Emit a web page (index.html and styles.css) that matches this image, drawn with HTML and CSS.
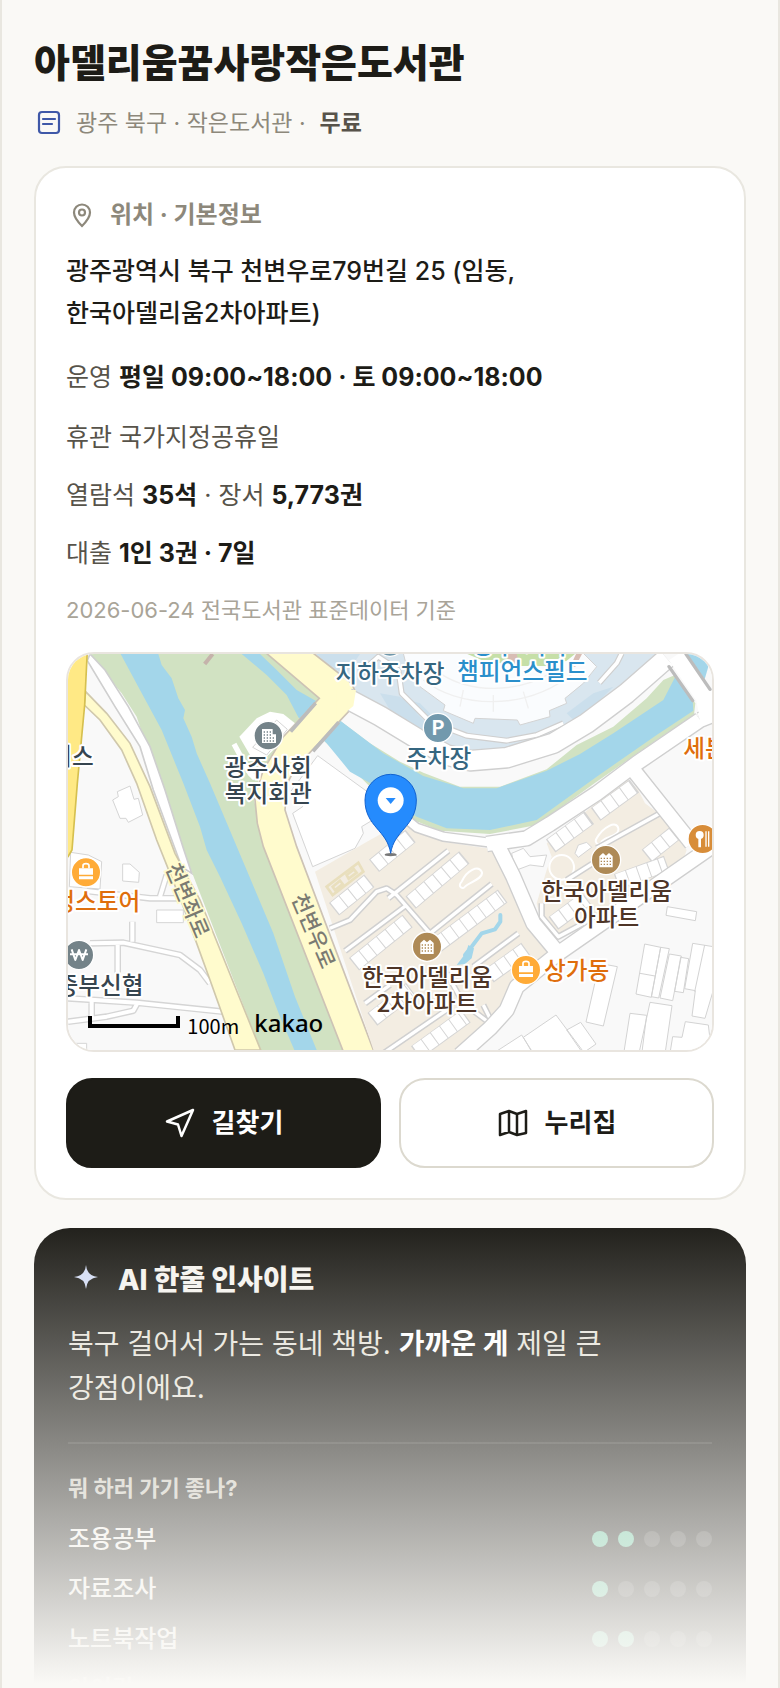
FILE: index.html
```html
<!DOCTYPE html>
<html lang="ko">
<head>
  <meta charset="UTF-8" />
  <meta name="viewport" content="width=device-width, initial-scale=1.0" />
  <title>아델리움꿈사랑작은도서관</title>
  <link rel="stylesheet" href="styles.css">
</head>
<body>
  <main class="page">
    <header class="head">
      <h1>아델리움꿈사랑작은도서관</h1>
      <p class="meta">
        <svg class="meta-icon" viewBox="0 0 30 30" aria-hidden="true">
          <rect x="5" y="4" width="20" height="21" rx="3"/>
          <path d="M9 11h12M9 16h9"/>
        </svg>
        <span>광주 북구 · 작은도서관 ·</span>
        <b>무료</b>
      </p>
    </header>

    <section class="card">
      <h2 class="card-title">
        <svg class="pin-icon" viewBox="0 0 32 32" aria-hidden="true">
          <path d="M16 27C11 22 8 18 8 13.500a8 8 0 0 1 16 0C24 18 21 22 16 27z"/>
          <circle cx="16" cy="13.500" r="3"/>
        </svg>
        위치 · 기본정보
      </h2>
      <p class="address">광주광역시 북구 천변우로79번길 25 (임동,<br>한국아델리움2차아파트)</p>
      <p class="hours">운영 <b>평일 09:00~18:00 · 토 09:00~18:00</b></p>
      <p class="row">휴관 국가지정공휴일</p>
      <p class="row">열람석 <b>35석</b> · 장서 <b>5,773권</b></p>
      <p class="row">대출 <b>1인 3권 · 7일</b></p>
      <p class="note">2026-06-24 전국도서관 표준데이터 기준</p>

      <div class="map">
        <svg viewBox="54 42 1932 1188" preserveAspectRatio="xMidYMid slice" role="img" aria-label="지도">
          <rect x="0" y="0" width="2100" height="1300" fill="#f9f9f9"/>

          <!-- parks -->
          <path fill="#d1e2c2" d="M118 42H655L810 175 720 275 630 400 612 480 640 600 880 1230H632L450 760 400 630 330 440 260 230 215 160z"/>
          <path fill="#d1e2c2" d="M860 235 960 310 1050 365 1120 398 1230 440H1350L1490 388 1580 315 1690 260 1790 175 1840 120 1875 105 1936 190 1932 225 1820 300 1640 425 1460 555 1320 582 1170 572 1090 540 960 440 820 300z"/>

          <!-- river -->
          <path fill="#a3d6ea" d="M212 42H325L335 75 365 115 385 175 405 210 400 235 425 290 440 340 480 430 590 690 670 880 735 1070 800 1230H733L690 1130 640 1000 575 850 510 710 470 630 450 560 400 430 335 270 270 150z"/>
          <path fill="#a3d6ea" d="M575 42H630L680 90 740 150 810 190 875 245 1000 340 1120 408 1240 445H1340L1490 392 1590 342 1690 280 1840 180 1875 112 1928 180 1930 212 1820 285 1640 410 1460 540 1320 570 1190 565 1100 530 980 440 900 395 830 310 745 232 710 165 650 105z"/>
          <path fill="#a3d6ea" d="M1908 42H1986L1964 118z"/>
          <path fill="none" stroke="#c5b3ab" stroke-width="12" d="M488 42 464 72"/>

          <!-- stadium -->
          <path fill="#d9e6ef" d="M795 42H1830L1630 215 1530 285 1420 322 1300 335 1200 325 1110 275 910 150z"/>
          <path fill="#cbdfec" d="M800 42h130l-40 60-50-20zM990 160l60 10 120 120-60-20-90-60zM1040 170l70 20 80 80-40-10zM1550 220l80-60 60-20-60 60-60 40z"/>
          <g fill="none" stroke-linejoin="round">
            <path stroke="#cfcfcf" stroke-width="18" d="M935 95 985 50 1045 90 1055 160 1140 245 1250 287 1370 302 1460 285 1540 250M1648 128 1700 70 1715 40"/>
            <path stroke="#fff" stroke-width="11" d="M935 95 985 50 1045 90 1055 160 1140 245 1250 287 1370 302 1460 285 1540 250M1648 128 1700 70 1715 40"/>
          </g>
          <path fill="#fafcfe" stroke="#d3d3d3" stroke-width="3" d="M1060 40 1075 100 1110 140 1185 195 1180 212 1270 250 1275 235 1402 240 1410 255 1500 230 1498 212 1550 190 1545 175 1600 130 1640 80 1600 40z"/>
          <path fill="none" stroke="#f0f0f0" stroke-width="4" d="M1120 120C1220 200 1420 220 1570 100M1170 100c90 60 230 60 330 0M1240 150l-10 50M1330 165v50M1420 155l15 50"/>
          <path fill="#c6dfa8" d="M1252 42H1575L1550 62 1500 78 1410 78 1300 62z"/>
          <path fill="#d8bdb4" d="M1370 42h30l10 36h-30zM1578 42h18l-20 38h-16z"/>

          <!-- lots and buildings on the west bank -->
          <g fill="#fff" stroke="#d5d5d5" stroke-width="3">
            <path d="M188 480 205 470 202 455 240 438 252 478 265 475 278 525 235 547 228 535 210 535z"/>
            <path d="M218 672H240L268 697 266 727 218 723zM62 637 115 645 155 665 150 747 58 740zM320 810h80v38h-80zM54 1210h56v30H54z"/>
            <path stroke="none" d="M568 290 620 235 660 215 700 222 735 250 720 280 650 350 600 345z"/>
            <path fill="none" d="M608 322 680 240 712 268 650 345z"/>
            <path d="M803 347 1000 490 985 530 935 560 940 580 915 625 788 680 728 520 758 500 722 455z"/>
          </g>
          <g fill="none" stroke-linejoin="round">
            <path stroke="#d5d5d5" stroke-width="20" d="M110 753 300 775 400 775M330 770 350 705M120 910 220 908 390 945 450 990 480 1030M247 905V845M203 915V1000M54 1075 260 1088 520 1115M54 1145 170 1130 250 1112 262 1090M125 1080V1140"/>
            <path stroke="#fff" stroke-width="12" d="M110 753 300 775 400 775M330 770 350 705M120 910 220 908 390 945 450 990 480 1030M247 905V845M203 915V1000M54 1075 260 1088 520 1115M54 1145 170 1130 250 1112 262 1090M125 1080V1140"/>
            <path stroke="#fff" stroke-width="16" d="M552 312 600 400 615 415"/>
          </g>

          <!-- west roads -->
          <path fill="#fff" stroke="#cfcfcf" stroke-width="5" d="M112 62 120 42 165 90 235 200 300 320 345 450 400 625 425 700 395 680 310 450 270 320 195 200z"/>
          <path fill="#fffbcd" stroke="#d0c8ac" stroke-width="5" d="M107 155 170 220 240 310 300 440 375 640 450 780 632 1230H555L480 1020 400 800 320 600 260 430 215 330 150 240 103 195z"/>
          <path fill="#ffe985" stroke="#d6c04f" stroke-width="5" d="M40 30H112L104 195 82 430 66 630 54 650H40z"/>
          <path fill="#fffbcd" stroke="#cdc3b5" stroke-width="5" d="M640 32 808 175 700 290 640 390 614 470 622 550 640 620 880 1235H972L740 620 705 510 712 430 735 385 905 205 918 160 905 130 785 36z"/>
          <path stroke="#bcbcbc" stroke-width="11" d="M722 275 797 189M789 334 866 247"/>

          <!-- east blocks -->
          <path fill="#f3ede2" d="M795 695 960 600 1065 542 1180 605 1330 628 1380 720 1455 855 1515 940 1490 975 1415 1035 1390 1100 1340 1145 1250 1235H972z"/>
          <path fill="#f3ede2" d="M1490 610 1730 415 1765 450 1785 490 1825 520 1910 630 1900 660 1530 895 1470 830 1460 790 1490 690 1505 650z"/>
          <g fill="none" stroke="#e9dfbd" stroke-width="8">
            <path d="M830 740 925 668 940 695 848 765zM848 740 870 722 878 732 855 750zM890 705 912 688 920 698 896 716z"/>
            <path stroke="#fff" stroke-width="6" d="M1235 725c15-35 50-50 60-30s-45 35-50 45-25 0-10-15zM1640 595c20-35 60-55 65-30s-45 25-50 40-25 5-15-10z"/>
            <circle cx="1535" cy="682" r="37" stroke="#fff" stroke-width="6"/>
          </g>

          <g fill="none" stroke="#d5d5d5" stroke-width="48">
            <path d="M972 677 1082 588M852 808 958 722M1082 788 1243 652M912 973 1073 843M1157 918 1358 768M1317 1008 1428 928M967 1138 1083 1048M1097 1238 1248 1128M1502 618 1618 533M1637 523 1753 438M1790 648 1883 573M1510 850 1610 775M1700 725 1850 670"/>
          </g>
          <g fill="none" stroke="#fff" stroke-width="43" stroke-dasharray="31 3">
            <path d="M975 675 1080 590M855 805 955 725M1085 785 1240 655M915 970 1070 845M1160 915 1355 770M1320 1005 1425 930M970 1135 1080 1050M1100 1235 1245 1130M1505 615 1615 535M1640 520 1750 440M1793 645 1880 576M1513 847 1607 777M1703 723 1847 672"/>
          </g>

          <g fill="none" stroke-linejoin="round">
            <path stroke="#d0d0d0" stroke-width="19" d="M840 865 900 840 980 755 1010 745 1040 765 1140 880 1150 900M1015 775 1195 632M885 933 1070 795M1140 880 1325 732M1270 980 1405 880M945 1090 1020 1035M1000 1240 1190 1110M1190 1000 1240 1090 1320 1150M1300 1095 1325 1145M1475 790V830L1525 890 1600 850M1550 720 1660 650M1640 625 1830 520"/>
            <path stroke="#fff" stroke-width="10" d="M840 865 900 840 980 755 1010 745 1040 765 1140 880 1150 900M1015 775 1195 632M885 933 1070 795M1140 880 1325 732M1270 980 1405 880M945 1090 1020 1035M1000 1240 1190 1110M1190 1000 1240 1090 1320 1150M1300 1095 1325 1145M1475 790V830L1525 890 1600 850M1550 720 1660 650M1640 625 1830 520"/>
          </g>
          <path fill="none" stroke="#a3d6ea" stroke-width="12" stroke-linecap="round" stroke-linejoin="round" d="M1351 825V845L1335 868 1295 880 1265 920 1245 945"/>
          <path fill="#a3d6ea" d="M1220 975 1248 938 1255 915 1272 925 1265 955 1245 972z"/>
          <path fill="#fff" stroke="#d5d5d5" stroke-width="3" d="M1385 640 1420 625 1440 650 1490 645 1480 680 1440 675 1395 692zM1575 640l10-25 25-8 15 15-40 30z"/>

          <!-- main roads -->
          <g fill="none" stroke-linejoin="round">
            <path stroke="#cfcfcf" stroke-width="66" d="M890 175 990 228 1100 295 1190 345 1260 362 1370 353 1510 310 1610 250 1730 160 1850 55"/>
            <path stroke="#cfcfcf" stroke-width="32" d="M1060 530 1100 563 1180 590 1320 608"/>
            <path stroke="#cfcfcf" stroke-width="50" d="M1310 612 1430 595 1500 552 1640 460 1760 370 1950 240M1950 240 2000 220M1340 610 1390 710 1450 850 1525 940 1400 1040 1370 1110 1320 1165 1230 1245M1525 940 2000 610M1750 390 1925 610"/>
            <path stroke="#fff" stroke-width="58" d="M890 175 990 228 1100 295 1190 345 1260 362 1370 353 1510 310 1610 250 1730 160 1850 55"/>
            <path stroke="#fff" stroke-width="23" d="M1060 530 1100 563 1180 590 1320 608"/>
            <path stroke="#fff" stroke-width="42" d="M1310 612 1430 595 1500 552 1640 460 1760 370 1950 240M1950 240 2000 220M1340 610 1390 710 1450 850 1525 940 1400 1040 1370 1110 1320 1165 1230 1245M1525 940 2000 610M1750 390 1925 610"/>
            <path stroke="#fff" stroke-width="56" d="M1880 45 1965 170 1975 220"/>
            <path stroke="#bcbcbc" stroke-width="10" stroke-linecap="round" d="M1857 80 1928 182M1908 42 1980 148"/>
          </g>
          <path fill="#fffbcd" d="M860 150 918 150 910 198 860 240z"/>

          <!-- south east buildings -->
          <g fill="#fff" stroke="#d3d3d3" stroke-width="3">
            <path d="M1852 800 1940 815 1936 842 1848 826z"/>
            <path d="M1648 970 1702 980 1660 1158 1608 1146z"/>
            <path d="M1784 912 1832 922 1804 1072 1758 1062zM1832 922 1858 926 1826 1074 1804 1070zM1858 942 1894 948 1868 1082 1830 1074zM1892 952 1916 956 1900 1058 1874 1054zM1928 910 1990 920V1050L1965 1135 1926 1128 1936 1052 1904 1046z"/>
            <path fill="none" d="M1770 1000l45 8M1964 915l-30 140"/>
            <path d="M1740 1120 1790 1126 1776 1235H1722zM1800 1087 1866 1097 1846 1235H1768zM1906 1145 1975 1155 1985 1240H1860L1868 1190 1896 1192z"/>
            <path d="M1420 1192 1518 1125 1600 1235H1445zM1550 1170 1592 1147 1638 1212 1605 1235H1595zM1330 1240 1415 1185 1450 1240z"/>
          </g>

          <!-- place icons -->
          <g stroke="#fff" stroke-width="4">
            <circle cx="1020" cy="6" r="43" fill="#6f97ab"/>
            <circle cx="655" cy="287" r="43" fill="#748389"/>
            <circle cx="1164" cy="264" r="44" fill="#7299ad"/>
            <circle cx="1131" cy="920" r="44" fill="#ae8a56"/>
            <circle cx="1668" cy="660" r="44" fill="#ae8a56"/>
            <circle cx="108" cy="697" r="44" fill="#ffab37"/>
            <circle cx="1428" cy="990" r="44" fill="#ffab37"/>
            <circle cx="1958" cy="597" r="44" fill="#d88d39"/>
            <circle cx="87" cy="945" r="44" fill="#748389"/>
          </g>
          <path fill="#fff" d="M636 267h32v16h10v26h-42z"/>
          <path fill="none" stroke="#748389" stroke-width="4" stroke-dasharray="4 5" d="M641 276h26M641 285h26M641 294h36M641 303h36"/>
          <g fill="#fff">
            <path d="M1111 909l11-10 9 8 9-8 11 10v33h-40z"/>
            <path d="M1648 649l11-10 9 8 9-8 11 10v33h-40z"/>
          </g>
          <g fill="none" stroke="#ae8a56" stroke-width="4" stroke-dasharray="4 5">
            <path d="M1115 915h34M1115 924h34M1115 933h34M1652 655h34M1652 664h34M1652 673h34"/>
          </g>
          <g fill="#fff">
            <path d="M87 685h42v19H87zM87 709h42v9H87zM1407 978h42v19h-42zM1407 1002h42v9h-42z"/>
            <path fill="none" stroke="#fff" stroke-width="5" d="M99 685v-8a9 6 0 0 1 18 0v8M1419 978v-8a9 6 0 0 1 18 0v8"/>
            <circle cx="1949" cy="585" r="12"/>
            <path d="M1945 590h8v32h-8zM1966 574h4v46h-4zM1974 574h4v46h-4z"/>
          </g>
          <path fill="none" stroke="#fff" stroke-width="6" stroke-linejoin="round" d="M65 928 76 960 87 930 98 960 109 928M60 943H114"/>
          <text class="glyph" x="1164" y="286">P</text>

          <!-- labels -->
          <g class="label">
            <text x="1020" y="125" fill="#356680">지하주차장</text>
            <text x="1410" y="41" fill="#2a8fcb">광주-기아</text>
            <text x="1417" y="119" fill="#2a8fcb">챔피언스필드</text>
            <text x="1166" y="382" fill="#356680">주차장</text>
            <text x="655" y="407" fill="#36454f">광주사회</text>
            <text x="655" y="486" fill="#36454f">복지회관</text>
            <text x="66" y="375" fill="#36454f">비스</text>
            <text x="1965" y="352" fill="#df6e0c">세븐</text>
            <text x="1670" y="779" fill="#4e3527">한국아델리움</text>
            <text x="1670" y="858" fill="#4e3527">아파트</text>
            <text x="1131" y="1038" fill="#4e3527">한국아델리움</text>
            <text x="1131" y="1117" fill="#4e3527">2차아파트</text>
            <text x="1580" y="1018" fill="#df6e0c">상가동</text>
            <text x="140" y="811" fill="#df6e0c">정스토어</text>
            <text x="150" y="1063" fill="#36454f">중부신협</text>
          </g>
          <g class="road-label">
            <text transform="translate(392 790) rotate(67)">천변좌로</text>
            <text transform="translate(770 882) rotate(67)">천변우로</text>
          </g>

          <!-- marker -->
          <ellipse cx="1022" cy="644" rx="18" ry="5" fill="#777"/>
          <path fill="#258bfd" stroke="#1262d0" stroke-width="3" d="M1022 640C1012 570 945 560 945 480a77 77 0 0 1 154 0C1099 560 1032 570 1022 640z"/>
          <circle cx="1022" cy="481" r="39" fill="#fff"/>
          <path fill="#258bfd" d="M1007 474h30l-15 18z"/>

          <path fill="none" stroke="#000" stroke-width="12" d="M120 1128V1158H384V1128"/>
          <text class="scale" x="412" y="1181">100m</text>
          <text class="brand" x="613" y="1175">kakao</text>
        </svg>
      </div>

      <div class="actions">
        <button type="button" class="btn btn-dark">
          <svg viewBox="0 0 32 32" aria-hidden="true"><path d="M29 3 3 14.500 14 17.500 17.500 29z"/></svg>
          길찾기
        </button>
        <button type="button" class="btn">
          <svg viewBox="0 0 32 32" aria-hidden="true"><path d="M3 7 12 4 20 7 29 4V26L20 28 12 25 3 28zM12 4V25M20 7V28"/></svg>
          누리집
        </button>
      </div>
    </section>

    <section class="insight">
      <h2 class="insight-title">
        <svg viewBox="0 0 36 36" aria-hidden="true"><path d="M18 3Q19 14 30 15 19 16 18 27 17 16 6 15 17 14 18 3z"/></svg>
        AI 한줄 인사이트
      </h2>
      <p class="insight-text">북구 걸어서 가는 동네 책방. <b>가까운 게</b> 제일 큰<br>강점이에요.</p>
      <h3>뭐 하러 가기 좋나?</h3>
      <ul class="scores">
        <li>조용공부 <span class="dots"><i class="on"></i><i class="on"></i><i></i><i></i><i></i></span></li>
        <li>자료조사 <span class="dots"><i class="on"></i><i></i><i></i><i></i><i></i></span></li>
        <li>노트북작업 <span class="dots"><i class="on"></i><i class="on"></i><i></i><i></i><i></i></span></li>
        <li>아이랑 <span class="dots"><i class="on"></i><i class="on"></i><i class="on"></i><i></i><i></i></span></li>
      </ul>
    </section>
    <div class="fade"></div>
  </main>
</body>
</html>
```
FILE: styles.css
```css
* {
  box-sizing: border-box;
}
body {
  margin: 0;
  background: #faf9f6;
  color: #1d1c17;
  font-family: Inter, "Noto Sans CJK KR", sans-serif;
}
h1, h2, h3, p, ul {
  margin: 0;
}
.page {
  position: relative;
  height: 100vh;
  overflow: hidden;
  padding: 38px 32px 0;
  border: solid #e9e7e0;
  border-width: 0 2px;
}
h1 {
  font-size: 39px;
  line-height: 50px;
  font-weight: 800;
}
.meta {
  display: flex;
  align-items: center;
  margin-top: 18px;
  font-size: 23px;
  line-height: 34px;
  color: #8d887b;
}
.meta b {
  margin-left: 14px;
  font-weight: 600;
  color: #57534a;
}
.meta-icon {
  width: 30px;
  height: 30px;
  margin-right: 12px;
  fill: none;
  stroke: #3f58a8;
  stroke-width: 2.2;
  stroke-linecap: round;
}

.card {
  margin-top: 26px;
  padding: 30px;
  background: #fff;
  border: 2px solid #e9e7e0;
  border-radius: 32px;
}
.card-title {
  display: flex;
  align-items: center;
  gap: 12px;
  font-size: 24px;
  line-height: 34px;
  font-weight: 700;
  color: #8d887b;
}
.pin-icon {
  width: 32px;
  height: 32px;
  fill: none;
  stroke: #8d887b;
  stroke-width: 2.2;
}
.address {
  margin-top: 18px;
  font-size: 25px;
  line-height: 42px;
  font-weight: 500;
}
.hours {
  margin-top: 22px;
  font-size: 25px;
  line-height: 42px;
  color: #57534a;
}
.row {
  margin-top: 20px;
  font-size: 25px;
  line-height: 38px;
  color: #57534a;
}
.hours b, .row b {
  font-weight: 700;
  color: #1d1c17;
}
.note {
  margin-top: 22px;
  font-size: 22px;
  line-height: 32px;
  color: #a9a498;
}

.map {
  height: 400px;
  margin-top: 26px;
  border: 2px solid #e9e5df;
  border-radius: 28px;
  overflow: hidden;
}
.map svg {
  display: block;
  width: 100%;
  height: 100%;
  font-family: "Noto Sans CJK KR", sans-serif;
}
.label {
  font-size: 71px;
  font-weight: 500;
  text-anchor: middle;
  stroke: #fff;
  stroke-width: 12px;
  stroke-linejoin: round;
  paint-order: stroke;
}
.road-label {
  font-size: 64px;
  font-weight: 500;
  text-anchor: middle;
  fill: #7a7a72;
  stroke: #fffbcd;
  stroke-width: 10px;
  paint-order: stroke;
}
.glyph {
  fill: #fff;
  font-size: 60px;
  font-weight: 700;
  text-anchor: middle;
}
.scale {
  font-size: 60px;
}
.brand {
  font-family: "Noto Sans", sans-serif;
  font-size: 72px;
  font-weight: 500;
}

.actions {
  display: grid;
  grid-template-columns: 1fr 1fr;
  gap: 18px;
  margin-top: 26px;
}
.btn {
  display: flex;
  align-items: center;
  justify-content: center;
  gap: 16px;
  height: 90px;
  border: 2px solid #dcd9cf;
  border-radius: 26px;
  background: #fff;
  color: #1d1c17;
  font-family: inherit;
  font-size: 26px;
  line-height: 34px;
  font-weight: 700;
}
.btn-dark {
  background: #1d1c17;
  border-color: #1d1c17;
  color: #fff;
}
.btn svg {
  width: 32px;
  height: 32px;
  fill: none;
  stroke: currentColor;
  stroke-width: 2.5;
  stroke-linejoin: round;
}

.insight {
  margin-top: 28px;
  padding: 34px;
  background: #1d1c17;
  border-radius: 36px;
  color: #f5f3ee;
}
.insight-title {
  display: flex;
  align-items: center;
  gap: 14px;
  font-size: 28px;
  line-height: 36px;
  font-weight: 800;
}
.insight-title svg {
  width: 36px;
  height: 36px;
  fill: #d3dcf5;
}
.insight-text {
  margin-top: 24px;
  padding-bottom: 32px;
  border-bottom: 2px solid rgba(255, 255, 255, 0.1);
  font-size: 28px;
  line-height: 44px;
  color: #e6e3da;
}
.insight-text b {
  color: #fff;
}
.insight h3 {
  margin-top: 28px;
  font-size: 22px;
  line-height: 32px;
  font-weight: 700;
  color: #c9c6bb;
}
.scores {
  display: flex;
  flex-direction: column;
  gap: 20px;
  margin-top: 20px;
  padding: 0;
  list-style: none;
  font-size: 24px;
  line-height: 30px;
  font-weight: 500;
}
.scores li {
  display: flex;
  align-items: center;
  justify-content: space-between;
}
.dots {
  display: flex;
  gap: 10px;
}
.dots i {
  width: 16px;
  height: 16px;
  border-radius: 50%;
  background: rgba(255, 255, 255, 0.16);
}
.dots .on {
  background: #62c39c;
}

/* fades the teaser out towards the bottom edge */
.fade {
  position: absolute;
  left: 0;
  right: 0;
  bottom: 0;
  height: 472px;
  background: linear-gradient(rgba(250, 249, 246, 0), #faf9f6 99%);
}
```
